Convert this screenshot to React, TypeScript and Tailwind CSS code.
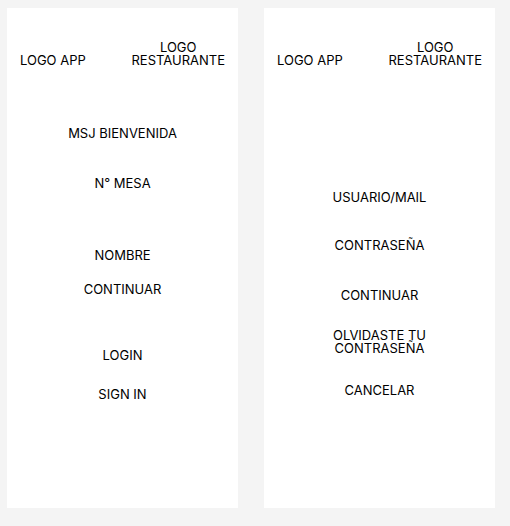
export default function App() {
  return (
    <div className="w-[510px] h-[526px] bg-[#f4f4f4] flex gap-[26px] pl-[7px] pt-[8px] font-['Inter',sans-serif] text-[13px] text-black">
      {/* Pantalla inicio */}
      <div className="w-[231px] h-[500px] bg-white flex flex-col items-center text-center leading-[14px]">
        <Header />
        <div className="mt-[59px]">MSJ BIENVENIDA</div>
        <div className="mt-[36px]">N° MESA</div>
        <div className="mt-[58px]">NOMBRE</div>
        <div className="mt-[20px]">CONTINUAR</div>
        <div className="mt-[52px]">LOGIN</div>
        <div className="mt-[25px]">SIGN IN</div>
      </div>

      {/* Pantalla login */}
      <div className="w-[231px] h-[500px] bg-white flex flex-col items-center text-center leading-[14px]">
        <Header />
        <div className="mt-[123px]">USUARIO/MAIL</div>
        <div className="mt-[34px]">CONTRASEÑA</div>
        <div className="mt-[36px]">CONTINUAR</div>
        <div className="mt-[27px] leading-[12.5px]">
          OLVIDASTE TU
          <br />
          CONTRASEÑA
        </div>
        <div className="mt-[29px]">CANCELAR</div>
      </div>
    </div>
  );
}

function Header() {
  return (
    <div className="w-full flex justify-between items-end px-[13px] pt-[33px] leading-[13px]">
      <div>LOGO APP</div>
      <div className="text-center">
        LOGO
        <br />
        RESTAURANTE
      </div>
    </div>
  );
}
